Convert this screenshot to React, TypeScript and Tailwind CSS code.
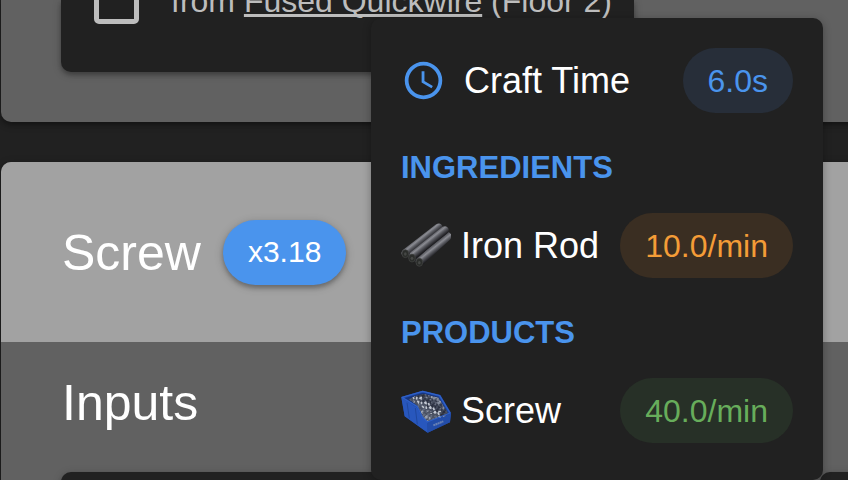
import React from "react";

const elevation =
  "shadow-[0_3px_4px_rgba(0,0,0,0.24),0_2px_10px_rgba(0,0,0,0.2)]";

function ClockIcon() {
  return (
    <svg viewBox="0 0 24 24" className="size-[45px] shrink-0 fill-[#4a94ed]" aria-hidden="true">
      <path d="M12,20A8,8 0 0,0 20,12A8,8 0 0,0 12,4A8,8 0 0,0 4,12A8,8 0 0,0 12,20M12,2A10,10 0 0,1 22,12A10,10 0 0,1 12,22C6.47,22 2,17.5 2,12A10,10 0 0,1 12,2M12.5,7V12.25L17,14.92L16.25,16.15L11,13V7H12.5Z" />
    </svg>
  );
}

const rods = [
  { x1: 14, y1: 96, x2: 113, y2: 20 },
  { x1: 57, y1: 122, x2: 139, y2: 46 },
  { x1: 38, y1: 102, x2: 131, y2: 28 },
];

function RodIcon() {
  return (
    <svg viewBox="0 0 150 150" className="size-[50px] shrink-0" aria-hidden="true">
      <path d="M10 94 L112 14 L146 34 L148 50 L62 128 L26 118 Z" fill="#2a2a2e" />
      {rods.map((r, i) => (
        <g key={r.x1}>
          <linearGradient
            id={`rod-${i}`}
            gradientUnits="userSpaceOnUse"
            x1={r.x1 - 8}
            y1={r.y1 - 10}
            x2={r.x1 + 8}
            y2={r.y1 + 10}
          >
            <stop offset="0" stopColor="#5d5e64" />
            <stop offset="0.25" stopColor="#8b8c93" />
            <stop offset="0.5" stopColor="#5a5b61" />
            <stop offset="0.8" stopColor="#2f2f34" />
            <stop offset="1" stopColor="#151518" />
          </linearGradient>
          <line {...r} stroke={`url(#rod-${i})`} strokeWidth="25" strokeLinecap="round" />
        </g>
      ))}
      {[[13, 98], [33, 111], [55, 124]].map(([cx, cy]) => (
        <g key={cx}>
          <ellipse cx={cx} cy={cy} rx="10" ry="12" fill="#2b2d2b" stroke="#444644" strokeWidth="2" />
          <ellipse cx={cx} cy={cy + 1} rx="4" ry="5" fill="#454745" />
        </g>
      ))}
    </svg>
  );
}

const specks = Array.from({ length: 260 }, (_, i) => ({
  x: 22 + ((i * 37) % 119),
  y: 18 + ((i * 53 + 11) % 89),
  angle: (i * 67) % 180,
  tone: ["#c3c8d2", "#626b7e", "#848c9c", "#2b3040", "#4a5163", "#9aa1b0", "#343a4b"][i % 7],
}));

function ScrewBinIcon() {
  return (
    <svg viewBox="0 0 150 150" className="size-[50px] shrink-0" aria-hidden="true">
      <clipPath id="bin-load">
        <path d="M24 40 L44 30 L68 24 L112 35 L141 82 L133 90 L79 106 L66 94 Q60 74 48 58 Z" />
      </clipPath>
      <path d="M1 33 L65 14 L118 27 L150 80 L147 109 L80 140 L11 91 Z" fill="#1f49a4" />
      <path d="M1 35 L48 65 L62 92 L79 110 L80 140 L11 91 Z" fill="#2857bd" />
      <path d="M79 110 L150 83 L147 109 L80 140 Z" fill="#234da9" />
      <path d="M10 37 L66 20 L113 32 L143 83 L79 107 L64 94 L49 62 Z" fill="#17357c" />
      <g clipPath="url(#bin-load)">
        <rect width="150" height="150" fill="#4b5263" />
        {specks.map((s, i) => (
          <rect key={i} x={s.x} y={s.y} width="8" height="5" fill={s.tone} transform={`rotate(${s.angle} ${s.x} ${s.y})`} />
        ))}
      </g>
      <path d="M3 34 L65 16 L116 29 L147 81 L79 108 L64 93 L49 62 Z" fill="none" stroke="#2f60c8" strokeWidth="4" strokeLinejoin="round" />
      <path d="M18 50 L25 97 M43 66 L49 115" stroke="#1f479e" strokeWidth="3" />
      <path d="M97 118 L127 106" stroke="#6880b4" strokeWidth="6" strokeDasharray="6 1" />
    </svg>
  );
}

function RateChip({ tone, children }: { tone: string; children: React.ReactNode }) {
  return (
    <span className={`ml-auto flex h-[65px] items-center rounded-full px-[25px] text-[32px] ${tone}`}>
      {children}
    </span>
  );
}

function ItemRow({ icon, name, rate, tone }: { icon: React.ReactNode; name: string; rate: string; tone: string }) {
  return (
    <div className="flex h-[65px] items-center">
      {icon}
      <span className="ml-2.5 text-[36px] text-white">{name}</span>
      <RateChip tone={tone}>{rate}</RateChip>
    </div>
  );
}

function SectionHeading({ children }: { children: React.ReactNode }) {
  return (
    <h3 className="flex h-[100px] items-center pt-2 text-[31px] font-bold text-[#4a94ed] uppercase">{children}</h3>
  );
}

function RecipeTooltip() {
  return (
    <div
      role="tooltip"
      className="absolute top-[18px] left-[371px] w-[452px] rounded-[10px] bg-[#212121] px-[30px] pt-[30px] pb-[37px] shadow-[0_2px_8px_rgba(0,0,0,0.3)]"
    >
      <div className="flex h-[65px] items-center">
        <ClockIcon />
        <span className="ml-[18px] text-[36px] text-white">Craft Time</span>
        <RateChip tone="bg-[#272e39] text-[#4a94ed]">6.0s</RateChip>
      </div>
      <SectionHeading>Ingredients</SectionHeading>
      <ItemRow icon={<RodIcon />} name="Iron Rod" rate="10.0/min" tone="bg-[#3a2e22] text-[#f49c37]" />
      <SectionHeading>Products</SectionHeading>
      <ItemRow icon={<ScrewBinIcon />} name="Screw" rate="40.0/min" tone="bg-[#273027] text-[#67ad5b]" />
    </div>
  );
}

export default function App() {
  return (
    <main className="relative h-screen overflow-hidden bg-[#212121] pl-px font-['Liberation_Sans',Arial,sans-serif] leading-none">
      <section className={`-mr-5 rounded-b-[10px] bg-[#616161] pb-[50px] pl-[60px] ${elevation}`}>
        <div className={`flex h-[72px] w-[573px] items-end rounded-b-[10px] bg-[#212121] px-[33px] pb-12 ${elevation}`}>
          <input
            id="quickwire-done"
            type="checkbox"
            className="size-[45px] shrink-0 appearance-none rounded-[5px] border-[5px] border-[#bdbdbd]"
          />
          <label htmlFor="quickwire-done" className="ml-8 text-[32px] leading-[46px] whitespace-nowrap text-[#bdbdbd]">
            from{" "}
            <a href="#fused-quickwire" className="underline decoration-[3px] underline-offset-2 [text-decoration-skip-ink:none]">
              Fused Quickwire
            </a>{" "}
            (Floor 2)
          </label>
        </div>
      </section>

      <section className={`mt-10 -mr-5 rounded-t-[10px] bg-[#616161] ${elevation}`}>
        <header className="flex h-[180px] items-center gap-[22px] rounded-t-[10px] bg-[#a2a2a2] px-[61px]">
          <h1 className="pt-0.5 text-[50px] text-white">Screw</h1>
          <span className={`flex h-[65px] items-center rounded-full bg-[#4a94ed] px-[25px] text-[30px] text-white ${elevation}`}>
            x3.18
          </span>
        </header>
        <h2 className="flex h-[130px] items-center px-[61px] pb-2 text-[50px] text-white">Inputs</h2>
        <div className="flex gap-[30px] pl-[60px]">
          <div className={`h-20 grow rounded-[10px] bg-[#212121] ${elevation}`} />
          <div className={`h-20 w-12 rounded-l-[10px] bg-[#212121] ${elevation}`} />
        </div>
      </section>

      <RecipeTooltip />
    </main>
  );
}
